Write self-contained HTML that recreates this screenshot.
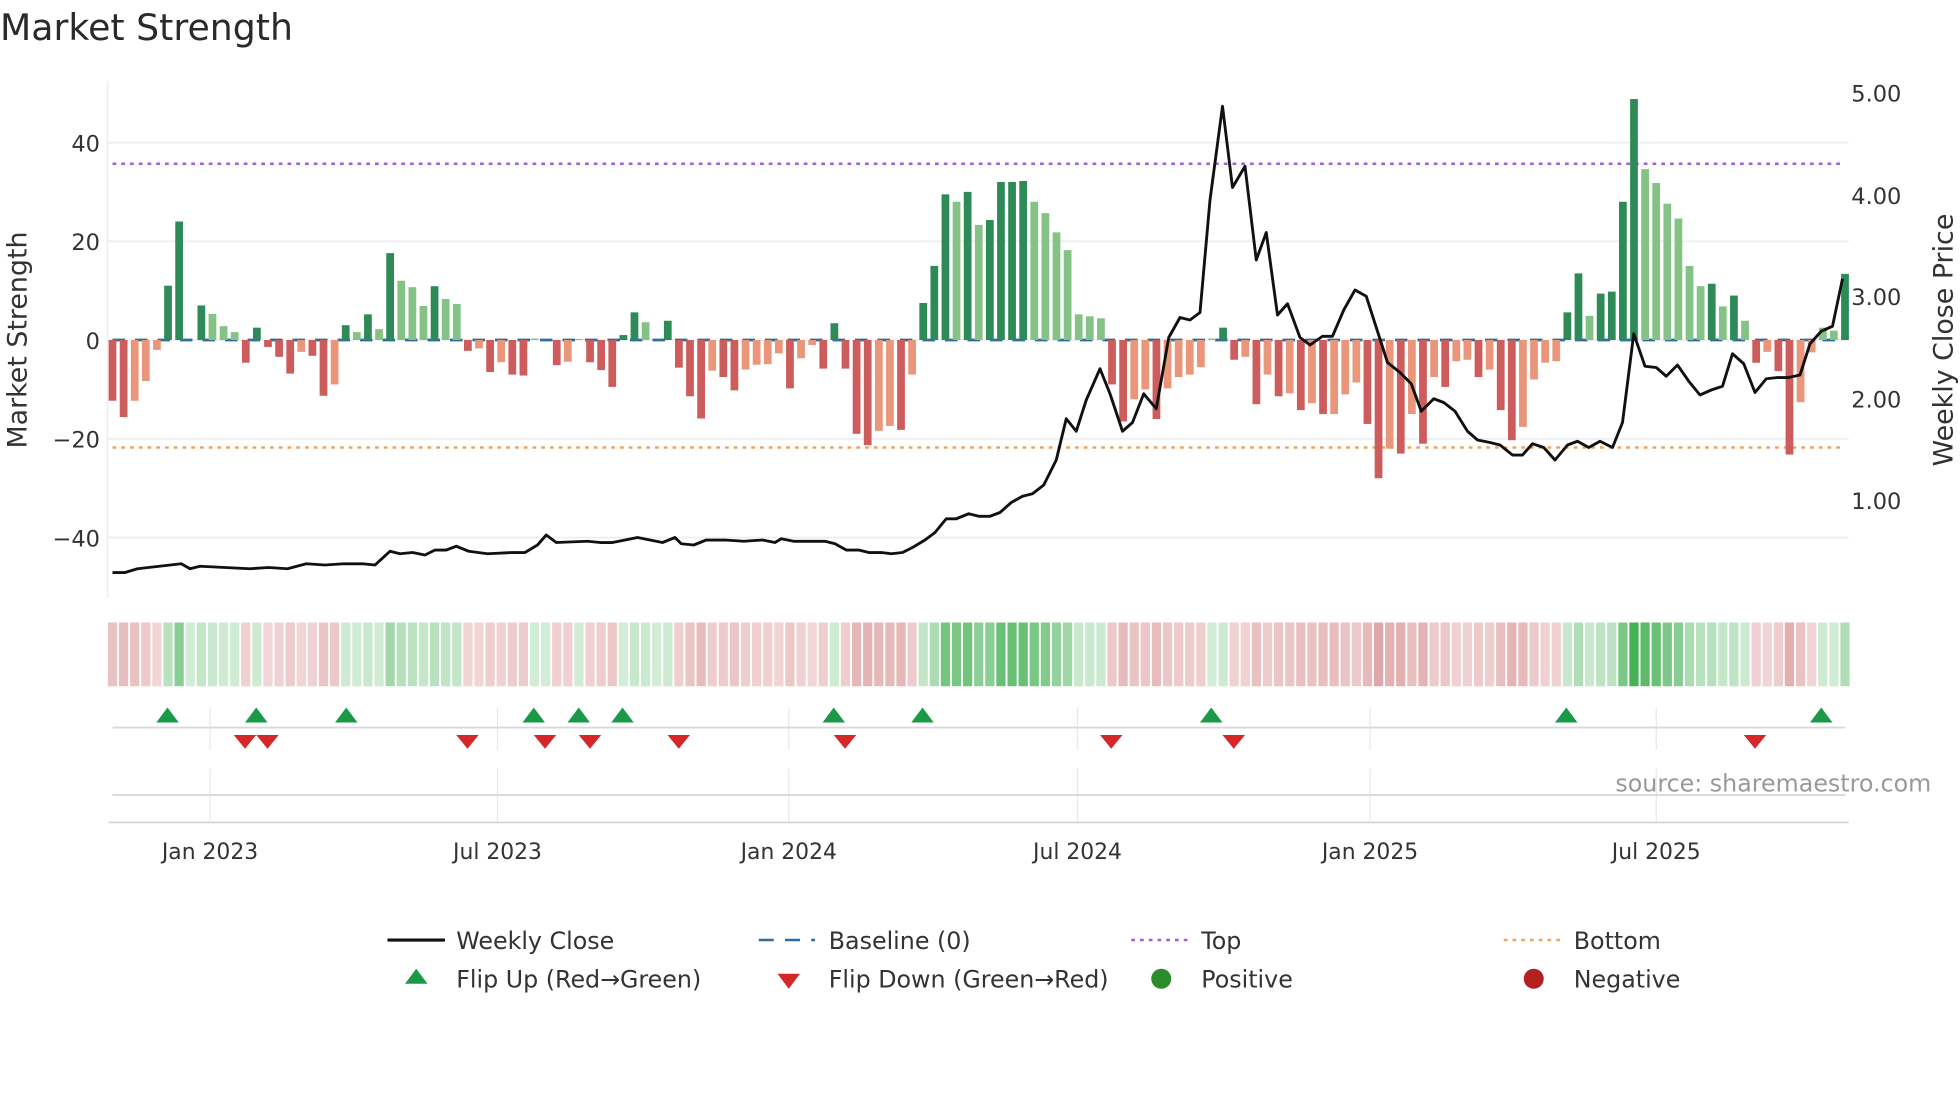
<!DOCTYPE html>
<html><head><meta charset="utf-8"><style>
html,body{margin:0;padding:0;background:#fff;}
svg{display:block;font-family:"DejaVu Sans","Liberation Sans",sans-serif;}
</style></head><body>
<svg id="s" width="1960" height="1102" viewBox="0 0 1568 881.6" xmlns="http://www.w3.org/2000/svg">
<rect width="1568" height="882" fill="#fff"/>
<text x="0" y="32" font-size="29" fill="#2a2a2a">Market Strength</text>
<g stroke="#eceef2" stroke-width="1.3">
<line x1="87" x2="1479" y1="114" y2="114"/><line x1="87" x2="1479" y1="193" y2="193"/>
<line x1="87" x2="1479" y1="272" y2="272"/><line x1="87" x2="1479" y1="351" y2="351"/>
<line x1="87" x2="1479" y1="430" y2="430"/>
<line x1="86" x2="86" y1="65" y2="478"/>
</g>
<g font-size="18" fill="#333" text-anchor="end">
<text x="80" y="121">40</text><text x="80" y="200">20</text><text x="80" y="279">0</text>
<text x="80" y="358">−20</text><text x="80" y="437">−40</text>
</g>
<g font-size="18" fill="#333">
<text x="1481" y="81">5.00</text><text x="1481" y="163">4.00</text><text x="1481" y="244">3.00</text>
<text x="1481" y="326">2.00</text><text x="1481" y="407">1.00</text>
</g>
<text transform="translate(21,272) rotate(-90)" text-anchor="middle" font-size="21.5" fill="#333">Market Strength</text>
<text transform="translate(1562,272) rotate(-90)" text-anchor="middle" font-size="21.5" fill="#333">Weekly Close Price</text>
<line x1="90" x2="1476" y1="131" y2="131" stroke="#a25fd6" stroke-width="2" stroke-dasharray="3,4"/>
<line x1="90" x2="1476" y1="358" y2="358" stroke="#f1a35e" stroke-width="2" stroke-dasharray="3,4"/>
<line x1="90" x2="1476" y1="272" y2="272" stroke="#2b6f9a" stroke-width="2.2" stroke-dasharray="10,8"/>
<g id="bars"></g>
<polyline id="price" fill="none" stroke="#111" stroke-width="2.3" stroke-linejoin="round"/>
<g id="heat"></g>
<g stroke="#e8e8e8" stroke-width="1">
<line x1="168" x2="168" y1="566" y2="600"/><line x1="398" x2="398" y1="566" y2="600"/>
<line x1="631" x2="631" y1="566" y2="600"/><line x1="862" x2="862" y1="566" y2="600"/>
<line x1="1096" x2="1096" y1="566" y2="600"/><line x1="1325" x2="1325" y1="566" y2="600"/>
<line x1="168" x2="168" y1="615" y2="658"/><line x1="398" x2="398" y1="615" y2="658"/>
<line x1="631" x2="631" y1="615" y2="658"/><line x1="862" x2="862" y1="615" y2="658"/>
<line x1="1096" x2="1096" y1="615" y2="658"/><line x1="1325" x2="1325" y1="615" y2="658"/>
</g>
<line x1="90" x2="1476" y1="582" y2="582" stroke="#d6d9de" stroke-width="1.5"/>
<line x1="90" x2="1476" y1="636" y2="636" stroke="#d6d9de" stroke-width="1.5"/>
<line x1="87" x2="1479" y1="658" y2="658" stroke="#d0d0d0" stroke-width="1.2"/>
<g id="marks"></g>
<text x="1545" y="633" text-anchor="end" font-size="19" fill="#999">source: sharemaestro.com</text>
<g font-size="17.5" fill="#333" text-anchor="middle">
<text x="168" y="687">Jan 2023</text><text x="398" y="687">Jul 2023</text><text x="631" y="687">Jan 2024</text>
<text x="862" y="687">Jul 2024</text><text x="1096" y="687">Jan 2025</text><text x="1325" y="687">Jul 2025</text>
</g>
<g font-size="19" fill="#333">
<line x1="310" x2="356" y1="752" y2="752" stroke="#111" stroke-width="2.5"/>
<text x="365" y="759">Weekly Close</text>
<line x1="607" x2="652" y1="752" y2="752" stroke="#2b6f9a" stroke-width="2" stroke-dasharray="12,9"/>
<text x="663" y="759">Baseline (0)</text>
<line x1="905" x2="950" y1="752" y2="752" stroke="#a25fd6" stroke-width="2" stroke-dasharray="3,4"/>
<text x="961" y="759">Top</text>
<line x1="1203" x2="1248" y1="752" y2="752" stroke="#f1a35e" stroke-width="2" stroke-dasharray="3,4"/>
<text x="1259" y="759">Bottom</text>
<polygon points="324,787 342,787 333,775" fill="#1a9a48"/>
<text x="365" y="790">Flip Up (Red→Green)</text>
<polygon points="622,779 640,779 631,791" fill="#d62728"/>
<text x="663" y="790">Flip Down (Green→Red)</text>
<circle cx="929" cy="783" r="8" fill="#2a8c2a"/>
<text x="961" y="790">Positive</text>
<circle cx="1227" cy="783" r="8" fill="#b22222"/>
<text x="1259" y="790">Negative</text>
</g>
</svg>
<script>
var NS="http://www.w3.org/2000/svg";
function el(t,a,p){var e=document.createElementNS(NS,t);for(var k in a)e.setAttribute(k,a[k]);p.appendChild(e);return e;}
var v1=[[-12.3,'d'],[-15.6,'d'],[-12.3,'l'],[-8.3,'l'],[-2,'l'],[11,'d'],[24,'d'],[0,'d'],[7,'d'],[5.3,'l'],[2.8,'l'],[1.6,'l'],[-4.6,'d'],[2.5,'d'],[-1.4,'d'],[-3.4,'d'],[-6.8,'d'],[-2.4,'l'],[-3.2,'d'],[-11.3,'d'],[-9,'l'],[3,'d'],[1.6,'l'],[5.2,'d'],[2.2,'l'],[17.6,'d'],[12,'l'],[10.7,'l'],[6.9,'l'],[10.9,'d'],[8.3,'l'],[7.3,'l'],[-2.2,'d'],[-1.7,'l'],[-6.5,'d'],[-4.5,'l'],[-7,'d'],[-7.2,'d'],[0.3,'l'],[0,'d'],[-5.1,'d'],[-4.4,'l'],[0.2,'l'],[-4.5,'d'],[-6.1,'d'],[-9.5,'d'],[1,'d'],[5.6,'d'],[3.6,'l'],[0,'d'],[3.9,'d'],[-5.6,'d'],[-11.4,'d'],[-15.9,'d'],[-6.2,'l'],[-7.5,'d'],[-10.2,'d'],[-6,'l'],[-5,'l'],[-4.9,'l'],[-2.7,'l'],[-9.8,'d'],[-3.7,'l'],[-1,'l'],[-5.8,'d'],[3.4,'d'],[-5.8,'d'],[-19,'d'],[-21.3,'d'],[-18.4,'l'],[-17.4,'l'],[-18.2,'d'],[-7,'l'],[7.5,'d'],[15,'d'],[29.5,'d'],[28,'l'],[30,'d'],
[23.3,'l'],[24.3,'d'],[32,'d'],[32,'d'],[32.2,'d'],[28,'l'],[25.7,'l'],[21.8,'l'],[18.2,'l'],[5.2,'l'],[4.8,'l'],[4.4,'l'],[-9,'d'],[-16.5,'d'],[-12,'l'],[-10,'l'],[-16,'d'],[-9.8,'l'],[-7.5,'l'],[-7,'l'],[-5.5,'l'],[0.3,'l'],[2.5,'d'],[-4,'d'],[-3.4,'l'],[-13,'d'],[-7,'l'],[-11.4,'d'],[-10.8,'l'],[-14.2,'d'],[-12.8,'l'],[-15,'d'],[-15,'l'],[-11,'l'],[-8.6,'l'],[-17,'d'],[-28,'d'],[-22,'l'],[-23,'d'],[-15,'l'],[-21,'d'],[-7.5,'l'],[-9.5,'d'],[-4.3,'l'],[-4,'l'],[-7.5,'d'],[-6,'l'],[-14.2,'d'],[-20.3,'d'],[-17.6,'l'],[-8,'l'],[-4.6,'l'],[-4.3,'l'],[5.6,'d'],[13.5,'d'],[4.9,'l'],[9.4,'d'],[9.8,'d'],[28,'d'],[48.8,'d'],[34.6,'l'],[31.8,'l'],[27.6,'l'],[24.6,'l'],[15,'l'],[10.9,'l'],[11.4,'d'],[6.8,'l'],[9,'d'],[3.9,'l'],[-4.6,'d'],[-2.4,'l'],[-6.3,'d'],[-23.2,'d'],[-12.6,'l'],[-2.5,'l'],[2.5,'l'],[1.9,'l'],[13.4,'d']];
var bars=document.getElementById('bars'),heat=document.getElementById('heat');
var n=v1.length,step=(1476-90)/(n-1);
for(var i=0;i<n;i++){
 var v=v1[i][0],t=v1[i][1],x=90+i*step;
 var c=v>=0?(t=='d'?'#2e8b57':'#85c285'):(t=='d'?'#cd5c5c':'#e9967a');
 if(Math.abs(v)>0.05){var y=272-v*3.95;el('rect',{x:x-3.1,y:Math.min(y,272),width:6.2,height:Math.abs(v*3.95),fill:c},bars);}
 var a=Math.min(1,Math.abs(v)/40);var hc;
 if(v>=0){a=Math.pow(a,1.3);var r=Math.round(210-a*140),g=Math.round(237-a*60),b=Math.round(214-a*130);hc='rgb('+r+','+g+','+b+')';}
 else{var r=Math.round(243-a*28),g=Math.round(216-a*70),b=Math.round(216-a*70);hc='rgb('+r+','+g+','+b+')';}
 el('rect',{x:x-4.4+0.7,y:498,width:7.4,height:51,fill:hc},heat);
}
var p=[[90,458],[100,458],[110,455],[145,451],[152,455],[160,453],[200,455],[215,454],[230,455],[245,451],[260,452],[275,451],[290,451],[300,452],[312,441],[320,443],[330,442],[340,444],[348,440],[357,440],[365,437],[375,441],[390,443],[410,442],[420,442],[430,436],[437,428],[445,434],[470,433],[480,434],[490,434],[510,430],[520,432],[530,434],[540,430],[545,435],[555,436],[565,432],[580,432],[595,433],[610,432],[620,434],[625,431],[635,433],[660,433],[668,435],[677,440],[687,440],[695,442],[705,442],[713,443],[722,442],[730,438],[740,432],[748,426],[757,415],[765,415],[775,411],[783,413],[792,413],[800,410],[809,402],[818,397],[826,395],[835,388],[845,368],[853,335],[861,345],[869,320],[880,295],[888,315],[898,345],[906,338],[915,315],[925,327],[935,270],[944,254],[952,256],[960,250],[968,160],[978,85],[986,150],[996,133],[1005,208],[1013,186],[1022,252],[1030,243],[1040,270],[1048,276],[1058,269],[1066,269],[1075,248],[1084,232],[1093,237],[1110,290],[1120,298],[1129,307],[1137,329],[1147,319],[1155,322],[1164,329],[1174,345],[1182,352],[1192,354],[1200,356],[1210,364],[1218,364],[1226,355],[1235,358],[1244,368],[1254,356],[1262,353],[1271,358],[1280,353],[1290,358],[1298,338],[1307,267],[1316,293],[1325,294],[1333,301],[1342,292],[1351,305],[1360,316],[1369,312],[1378,309],[1386,283],[1395,291],[1404,314],[1413,303],[1422,302],[1431,302],[1440,300],[1448,275],[1457,265],[1466,261],[1474,223]];
document.getElementById('price').setAttribute('points',p.map(function(q){return q.join(',')}).join(' '));
var m=document.getElementById('marks');
[134,205,277,427,463,498,667,738,969,1253,1457].forEach(function(x){el('polygon',{points:(x-9)+',578 '+(x+9)+',578 '+x+',566',fill:'#1a9a48'},m);});
[196,214,374,436,472,543,676,889,987,1404].forEach(function(x){el('polygon',{points:(x-9)+',588 '+(x+9)+',588 '+x+',599',fill:'#d62728'},m);});
</script>
</body></html>
